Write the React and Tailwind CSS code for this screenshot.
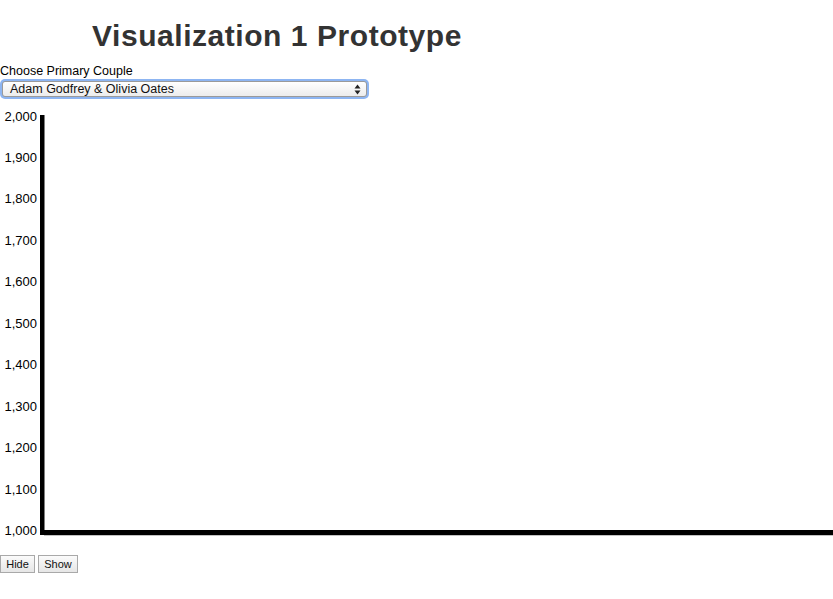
const TICKS = [2000, 1900, 1800, 1700, 1600, 1500, 1400, 1300, 1200, 1100, 1000];

// y position (inside the svg) for an axis value
const yFor = (v) => 11 + ((2000 - v) / 1000) * 414.5;

function Chevrons() {
  return (
    <svg width="7" height="11" viewBox="0 0 7 11">
      <path d="M3.5 0.5 L6.5 4.5 L0.5 4.5 Z" fill="#222" />
      <path d="M3.5 10.5 L6.5 6.5 L0.5 6.5 Z" fill="#222" />
    </svg>
  );
}

function Chart() {
  return (
    <svg width="833" height="435" className="block">
      {TICKS.map((v) => (
        <text
          key={v}
          x="37"
          y={yFor(v) + 4.5}
          textAnchor="end"
          fontSize="13"
          fill="#000"
          fontFamily="'Liberation Sans', Arial, sans-serif"
        >
          {v.toLocaleString("en-US")}
        </text>
      ))}
      <rect x="40" y="10" width="4.5" height="420" fill="#000" />
      <rect x="44" y="425" width="789" height="5" fill="#000" />
      <rect x="44" y="430" width="789" height="0.6" fill="#999" />
    </svg>
  );
}

export default function App() {
  return (
    <div className="w-[833px] h-[599px] bg-white text-black font-['Liberation_Sans',Arial,sans-serif] overflow-hidden">
      <h1 className="pt-[18px] pl-[92px] text-[30px] leading-[36px] font-bold tracking-[0.55px] text-[#333]">
        Visualization 1 Prototype
      </h1>

      <div className="mt-[10px] text-[12.5px] leading-[15px]">Choose Primary Couple</div>

      {/* select with focus ring */}
      <div className="w-[369px] h-[20px] rounded-[5px] bg-[#8db5f2] p-[2px]">
        <div className="h-full rounded-[3px] border border-[#9a9a9a] bg-gradient-to-b from-white to-[#ececec] flex items-center justify-between pl-[7px] pr-[5px]">
          <span className="text-[12.5px] leading-none text-[#111]">Adam Godfrey &amp; Olivia Oates</span>
          <Chevrons />
        </div>
      </div>

      <div className="mt-[6px]">
        <Chart />
      </div>

      <div className="mt-[15px] flex gap-[3px]">
        <button className="w-[35px] h-[18px] border border-[#a9a9a9] bg-gradient-to-b from-[#fbfbfb] to-[#e6e6e6] text-[11px] leading-none text-[#111]">
          Hide
        </button>
        <button className="w-[40px] h-[18px] border border-[#a9a9a9] bg-gradient-to-b from-[#fbfbfb] to-[#e6e6e6] text-[11px] leading-none text-[#111]">
          Show
        </button>
      </div>
    </div>
  );
}
